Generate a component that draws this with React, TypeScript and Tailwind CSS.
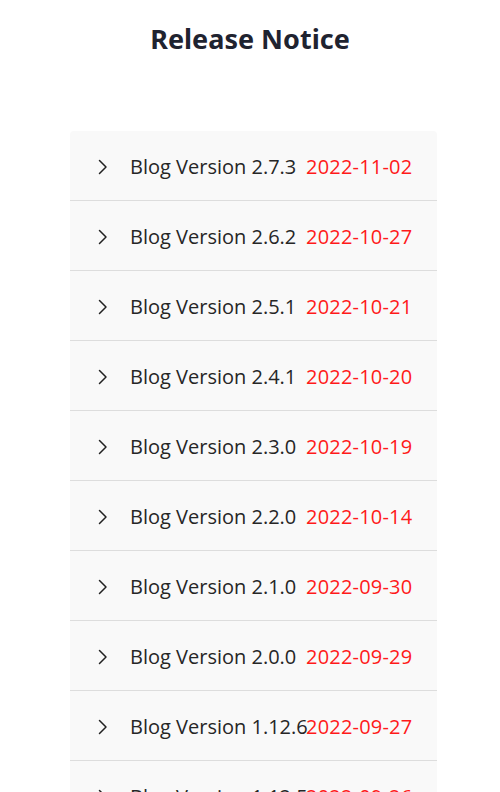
import React from "react";

const releases = [
  { version: "2.7.3", date: "2022-11-02" },
  { version: "2.6.2", date: "2022-10-27" },
  { version: "2.5.1", date: "2022-10-21" },
  { version: "2.4.1", date: "2022-10-20" },
  { version: "2.3.0", date: "2022-10-19" },
  { version: "2.2.0", date: "2022-10-14" },
  { version: "2.1.0", date: "2022-09-30" },
  { version: "2.0.0", date: "2022-09-29" },
  { version: "1.12.6", date: "2022-09-27" },
  { version: "1.12.5", date: "2022-09-26" },
];

const Chevron = () => (
  <svg className="w-[16px] h-[16px] text-[#222]" viewBox="0 0 16 16" fill="none">
    <path d="M4.5 1.5l6.5 6.5-6.5 6.5" stroke="currentColor" strokeWidth={1.5} strokeLinecap="round" strokeLinejoin="round" />
  </svg>
);

export default function App() {
  return (
    <div className="bg-white min-h-screen" style={{ fontFamily: "'Open Sans', sans-serif" }}>
      <h1 className="text-center pt-[21px] text-[27px] leading-[36px] font-bold text-[#1f2330] font-['Noto_Sans',sans-serif]">
        Release Notice
      </h1>

      {/* release list */}
      <div className="mt-[74px] mx-[70px] w-[367px] bg-[#f9f9f9] rounded-t">
        {releases.map((r) => (
          <div
            key={r.version}
            className="h-[70px] flex items-center pl-[25px] pt-[2px] border-b border-[#dddddd]"
          >
            <Chevron />
            <span className="ml-[19px] w-[176px] whitespace-nowrap text-[20px] text-[#262626]">
              Blog Version {r.version}
            </span>
            <span className="text-[20px] text-[#ff1a1a] whitespace-nowrap tracking-[0.2px]">{r.date}</span>
          </div>
        ))}
      </div>
    </div>
  );
}
